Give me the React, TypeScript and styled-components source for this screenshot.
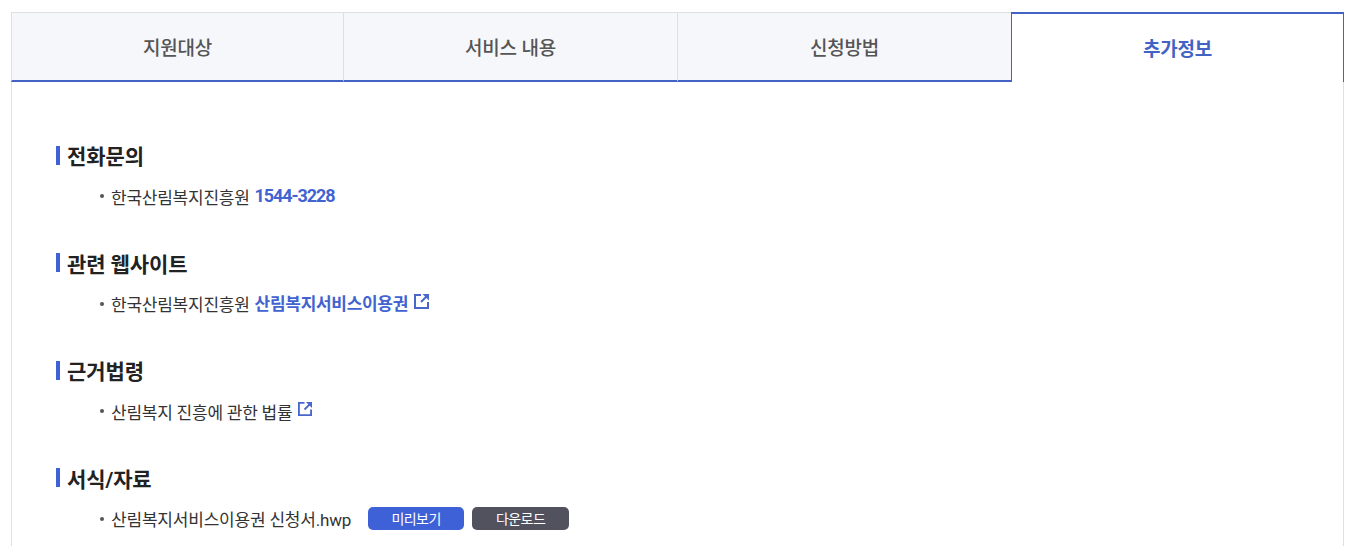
import React from "react";
import styled, { createGlobalStyle } from "styled-components";

const GlobalStyle = createGlobalStyle`
    * {
        box-sizing: border-box;
    }
    body {
        margin: 0;
        background: #fff;
        overflow: hidden;
        font-family: Roboto, 'Noto Sans CJK KR', sans-serif;
        letter-spacing: -0.24px;
        color: #333;
    }
    ul {
        list-style: none;
        margin: 0;
        padding: 0;
    }
`

const Page = styled.div`
    height: 546px;
    padding: 12px 9px 0 11px;
    overflow: hidden;
`

const TabList = styled.div`
    display: grid;
    grid-template-columns: 332px 334px 334px 1fr;
    height: 70px;
`

const Tab = styled.button<{ $active?: boolean }>`
    padding: 0 0 1px;
    border: 1px solid #dfe0e4;
    border-right: 0;
    border-bottom: 2px solid #4263c4;
    background: #f6f7fb;
    font-family: inherit;
    font-weight: 500;
    font-size: 19px;
    letter-spacing: -0.2px;
    color: #555;
    ${(props) => props.$active && `
        border: 1px solid #4263c4;
        border-top-width: 2px;
        border-bottom: 0;
        background: #fff;
        font-weight: 700;
        color: #4263c4;
    `}
`

const Panel = styled.div`
    height: 600px;
    padding: 59px 44px 0;
    border: 1px solid #dfe0e4;
    border-top: 0;
`

const Section = styled.section`
    height: 107.5px;
`

const Title = styled.h3`
    display: flex;
    align-items: center;
    gap: 7px;
    height: 28px;
    margin: 0;
    font-size: 21px;
    font-weight: 700;
    letter-spacing: -0.1px;
    color: #222;
    &::before {
        content: '';
        width: 4px;
        height: 19px;
        background: #3f61d6;
    }
`

const Item = styled.li`
    display: flex;
    align-items: center;
    height: 24px;
    margin: 15px 0 0 44px;
    font-size: 17px;
    white-space: pre;
    &::before {
        content: '';
        width: 4px;
        height: 4px;
        margin-right: 7px;
        border-radius: 50%;
        background: #555;
    }
`

const Link = styled.a`
    margin: 0 0 2px 5px;
    font-weight: 700;
    letter-spacing: -0.3px;
    color: #4263d0;
`

const Phone = styled(Link)`
    margin-bottom: 1px;
    font-size: 18px;
    letter-spacing: -1.1px;
`

const Icon = styled.svg<{ $size: number }>`
    width: ${(props) => props.$size}px;
    height: ${(props) => props.$size}px;
    margin: -5px 0 0 6px;
    flex: none;
`

const FileName = styled.span`
    letter-spacing: -0.2px;
`

const Button = styled.button<{ $dark?: boolean }>`
    width: ${(props) => (props.$dark ? "97px" : "96px")};
    height: 23px;
    margin-left: ${(props) => (props.$dark ? "8px" : "17px")};
    padding: 0 0 1px;
    border: 0;
    border-radius: 5px;
    background: ${(props) => (props.$dark ? "#52525f" : "#3e61d8")};
    font-family: inherit;
    font-size: 14px;
    letter-spacing: -0.6px;
    color: #fff;
`

const ExternalIcon = ({ size }: { size: number }) => (
    <Icon $size={size} viewBox="0 0 15 15" fill="none" stroke="#4a66cc" strokeWidth="2">
        <path d="M7 1H1v13h13V8" />
        <path d="M13 2L7 8" />
        <path d="M8.5 0H15v6.5z" fill="#4a66cc" stroke="none" />
    </Icon>
)

const tabs = ["지원대상", "서비스 내용", "신청방법", "추가정보"];

const App = () => {
    return <>
        <GlobalStyle />
        <Page>
            <TabList>
                {tabs.map((tab) => <Tab key={tab} $active={tab === "추가정보"}>{tab}</Tab>)}
            </TabList>
            <Panel>
                <Section>
                    <Title>전화문의</Title>
                    <ul><Item>한국산림복지진흥원<Phone>1544-3228</Phone></Item></ul>
                </Section>
                <Section>
                    <Title>관련 웹사이트</Title>
                    <ul><Item>한국산림복지진흥원<Link>산림복지서비스이용권</Link><ExternalIcon size={15} /></Item></ul>
                </Section>
                <Section>
                    <Title>근거법령</Title>
                    <ul><Item>산림복지 진흥에 관한 법률<ExternalIcon size={14} /></Item></ul>
                </Section>
                <Section>
                    <Title>서식/자료</Title>
                    <ul><Item><FileName>산림복지서비스이용권 신청서.hwp</FileName><Button>미리보기</Button><Button $dark>다운로드</Button></Item></ul>
                </Section>
            </Panel>
        </Page>
    </>
}

export default App
